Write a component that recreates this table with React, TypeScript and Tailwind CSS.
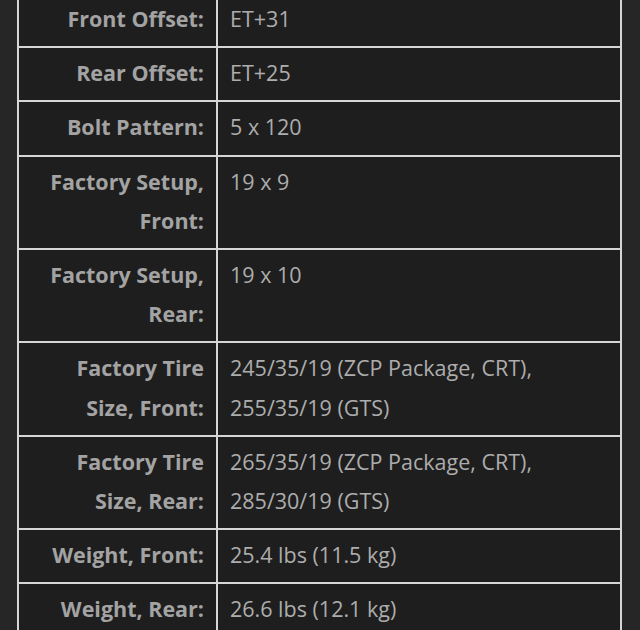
const rows: { label: string[]; value: string[] }[] = [
  { label: ["Front Offset:"], value: ["ET+31"] },
  { label: ["Rear Offset:"], value: ["ET+25"] },
  { label: ["Bolt Pattern:"], value: ["5 x 120"] },
  { label: ["Factory Setup,", "Front:"], value: ["19 x 9"] },
  { label: ["Factory Setup,", "Rear:"], value: ["19 x 10"] },
  { label: ["Factory Tire", "Size, Front:"], value: ["245/35/19 (ZCP Package, CRT),", "255/35/19 (GTS)"] },
  { label: ["Factory Tire", "Size, Rear:"], value: ["265/35/19 (ZCP Package, CRT),", "285/30/19 (GTS)"] },
  { label: ["Weight, Front:"], value: ["25.4 lbs (11.5 kg)"] },
  { label: ["Weight, Rear:"], value: ["26.6 lbs (12.1 kg)"] },
];

const Lines = ({ lines }: { lines: string[] }) => (
  <>
    {lines.map((l, i) => (
      <span key={i}>
        {l}
        {i < lines.length - 1 && <br />}
      </span>
    ))}
  </>
);

export default function App() {
  return (
    <div className="h-[630px] w-[640px] overflow-hidden bg-[#262626] pl-[17px] font-['Open_Sans',sans-serif] text-[21.5px] leading-[39.2px]">
      {/* specs table, top row partly scrolled off */}
      <table className="-mt-[8px] w-[605px] table-fixed border-collapse bg-[#1e1e1e]">
        <colgroup>
          <col className="w-[199px]" />
          <col />
        </colgroup>
        <tbody>
          {rows.map((r, i) => (
            <tr key={i}>
              <td className="border-2 border-[#d6d6d6] pt-[5px] pb-[8px] pr-[12px] pl-1 text-right align-top font-bold text-[#a3a3a3]">
                <Lines lines={r.label} />
              </td>
              <td className="border-2 border-[#d6d6d6] pt-[5px] pb-[8px] pl-[12px] pr-2 align-top text-[#adadad]">
                <Lines lines={r.value} />
              </td>
            </tr>
          ))}
        </tbody>
      </table>
    </div>
  );
}
